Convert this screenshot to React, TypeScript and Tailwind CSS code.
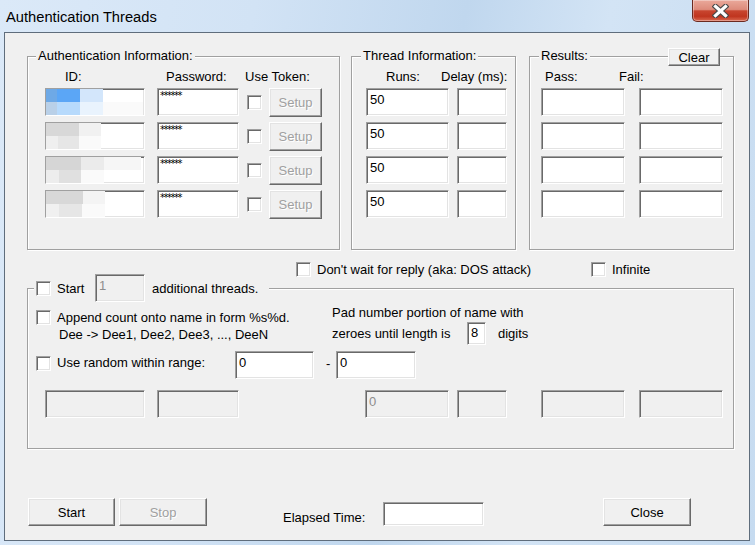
import React from "react";

const sunken =
  "border border-t-[#a0a0a0] border-l-[#a0a0a0] border-b-white border-r-white shadow-[inset_1px_1px_0_#696969,inset_-1px_-1px_0_#e3e3e3]";
const raised =
  "border border-t-white border-l-white border-b-[#696969] border-r-[#696969] shadow-[inset_-1px_-1px_0_#a0a0a0,inset_1px_1px_0_#e3e3e3] bg-[#f0f0f0]";

function Field({
  w,
  h = 28,
  disabled = false,
  text,
  children,
  className = "",
  pt = "pt-[3px]",
}: {
  w: number;
  h?: number;
  disabled?: boolean;
  text?: string;
  children?: React.ReactNode;
  className?: string;
  pt?: string;
}) {
  return (
    <div
      className={`${sunken} ${disabled ? "bg-[#f0f0f0] text-[#8d8d8d]" : "bg-white text-black"} overflow-hidden shrink-0 ${className}`}
      style={{ width: w, height: h }}
    >
      {children}
      {text !== undefined && (
        <div className={`pl-[3px] ${pt} text-[13px] leading-[15px]`}>{text}</div>
      )}
    </div>
  );
}

function Check({ className = "" }: { className?: string }) {
  return <div className={`w-[15px] h-[15px] shrink-0 bg-white ${sunken} ${className}`} />;
}

function Btn({
  w,
  h = 28,
  label,
  disabled = false,
  className = "",
}: {
  w: number;
  h?: number;
  label: string;
  disabled?: boolean;
  className?: string;
}) {
  return (
    <div
      className={`${raised} shrink-0 flex items-center justify-center text-[13px] leading-[15px] ${disabled ? "text-[#a0a0a0] [text-shadow:1px_1px_0_#ffffff]" : "text-black"} ${className}`}
      style={{ width: w, height: h }}
    >
      {label}
    </div>
  );
}

function Group({
  w,
  h,
  legend,
  legendLeft,
  children,
  extra,
}: {
  w: number;
  h: number;
  legend: React.ReactNode;
  legendLeft: number;
  children?: React.ReactNode;
  extra?: React.ReactNode;
}) {
  return (
    <div
      className="relative shrink-0 border border-[#a0a0a0] shadow-[inset_1px_1px_0_#ffffff,1px_1px_0_#ffffff]"
      style={{ width: w, height: h }}
    >
      <div
        className="absolute -top-[9px] bg-[#f0f0f0] px-[2px] text-[13px] leading-[15px]"
        style={{ left: legendLeft }}
      >
        {legend}
      </div>
      {extra}
      {children}
    </div>
  );
}

type Cell = [number, string];
const mosaics: { top: Cell[]; bottom: Cell[] }[] = [
  {
    top: [
      [11, "#6ea9e6"],
      [23, "#5ba6f6"],
      [23, "#d3e6fb"],
    ],
    bottom: [
      [11, "#b9d0e8"],
      [23, "#b7dafc"],
      [23, "#e9f3fd"],
      [40, "#fafafa"],
    ],
  },
  {
    top: [
      [33, "#d8d8d8"],
      [22, "#f1f1f1"],
    ],
    bottom: [
      [12, "#efefef"],
      [21, "#e6e6e6"],
      [22, "#fafafa"],
    ],
  },
  {
    top: [
      [35, "#d6d6d6"],
      [23, "#ebebeb"],
      [37, "#f6f6f6"],
    ],
    bottom: [
      [13, "#ededed"],
      [22, "#e0e0e0"],
      [23, "#fafafa"],
    ],
  },
  {
    top: [
      [37, "#d8d8d8"],
      [22, "#f4f4f4"],
    ],
    bottom: [
      [13, "#f0f0f0"],
      [23, "#e6e6e6"],
      [23, "#fafafa"],
    ],
  },
];

function Mosaic({ idx }: { idx: number }) {
  const m = mosaics[idx];
  return (
    <div className="flex flex-col">
      <div className="flex h-[13px]">
        {m.top.map(([w, c], i) => (
          <div key={i} style={{ width: w, background: c }} />
        ))}
      </div>
      <div className="flex h-[13px]">
        {m.bottom.map(([w, c], i) => (
          <div key={i} style={{ width: w, background: c }} />
        ))}
      </div>
    </div>
  );
}

export default function App() {
  const rows = [0, 1, 2, 3];
  return (
    <div className="w-[755px] h-[545px] overflow-hidden font-['Liberation_Sans',Arial,sans-serif] text-black bg-[linear-gradient(100deg,#dbe9f8_0%,#d2e3f5_30%,#c0d7ee_55%,#d3e4f5_72%,#c6dbf0_100%)]">
      {/* title bar */}
      <div className="h-[32px] flex items-start justify-between">
        <div className="pl-[6px] pt-[8px] text-[14.7px] leading-[18px] text-black">
          Authentication Threads
        </div>
        <div className="mr-[6px] w-[57px] h-[22px] rounded-b-[5px] border border-t-0 border-[#6b2a20] bg-[linear-gradient(#eaa99b_0%,#dd8b7b_45%,#c8452f_52%,#c0351f_78%,#d9684f_100%)] shadow-[inset_0_0_0_1px_rgba(255,255,255,0.35)] flex items-center justify-center">
          <svg width="17" height="14" viewBox="0 0 17 14">
            <path d="M3.5 2.5 L13.5 11.5 M13.5 2.5 L3.5 11.5" stroke="#4a4a4a" strokeWidth="5.5" strokeLinecap="square" />
            <path d="M3.5 2.5 L13.5 11.5 M13.5 2.5 L3.5 11.5" stroke="#ffffff" strokeWidth="3.2" strokeLinecap="square" />
          </svg>
        </div>
      </div>

      {/* client area */}
      <div className="ml-[4px] w-[746px] h-[509px] border border-[#5f6d7c] bg-[#f0f0f0] flex flex-col text-[13px] leading-[15px]">
        {/* top groups */}
        <div className="mt-[23px] pl-[22px] flex">
          <Group w={313} h={194} legend="Authentication Information:" legendLeft={8}>
            <div className="pt-[12px] flex h-[27px]">
              <div className="w-[138px] pl-[37px]">ID:</div>
              <div className="w-[79px]">Password:</div>
              <div>Use Token:</div>
            </div>
            <div className="mt-[4px] flex flex-col gap-[6px]">
              {rows.map((r) => (
                <div key={r} className="h-[28px] pl-[17px] flex items-center">
                  <Field w={100}>
                    <Mosaic idx={r} />
                  </Field>
                  <Field w={82} className="ml-[12px]">
                    <div className="pl-[2px] pt-[2px] text-[10px] leading-[9px] tracking-[-1.5px] font-['DejaVu_Sans',sans-serif]">
                      ******
                    </div>
                  </Field>
                  <Check className="ml-[8px]" />
                  <Btn w={53} h={29} label="Setup" disabled className="ml-[7px]" />
                </div>
              ))}
            </div>
          </Group>

          <div className="ml-[11px]">
            <Group w={165} h={194} legend="Thread Information:" legendLeft={9}>
              <div className="pt-[12px] flex h-[27px]">
                <div className="w-[89px] pl-[34px]">Runs:</div>
                <div>Delay (ms):</div>
              </div>
              <div className="mt-[4px] flex flex-col gap-[6px]">
                {rows.map((r) => (
                  <div key={r} className="h-[28px] pl-[14px] flex items-center">
                    <Field w={83} text="50" />
                    <Field w={50} className="ml-[8px]" />
                  </div>
                ))}
              </div>
            </Group>
          </div>

          <div className="ml-[13px]">
            <Group
              w={205}
              h={194}
              legend="Results:"
              legendLeft={9}
              extra={
                <div className="absolute left-[138px] -top-[9px]">
                  <Btn w={52} h={18} label="Clear" />
                </div>
              }
            >
              <div className="pt-[12px] flex h-[27px]">
                <div className="w-[89px] pl-[15px]">Pass:</div>
                <div>Fail:</div>
              </div>
              <div className="mt-[4px] flex flex-col gap-[6px]">
                {rows.map((r) => (
                  <div key={r} className="h-[28px] pl-[11px] flex items-center">
                    <Field w={84} />
                    <Field w={84} className="ml-[14px]" />
                  </div>
                ))}
              </div>
            </Group>
          </div>
        </div>

        {/* don't wait / infinite row */}
        <div className="mt-[12px] h-[15px] pl-[291px] flex items-center">
          <div className="w-[295px] flex items-center">
            <Check />
            <span className="ml-[6px] whitespace-nowrap">Don't wait for reply (aka: DOS attack)</span>
          </div>
          <Check />
          <span className="ml-[6px]">Infinite</span>
        </div>

        {/* lower group */}
        <div className="mt-[11px] pl-[22px]">
          <div className="relative w-[707px] h-[161px] border border-[#a0a0a0] shadow-[inset_1px_1px_0_#ffffff,1px_1px_0_#ffffff]">
            <div className="absolute left-[6px] -top-[15px] h-[28px] bg-[#f0f0f0] pl-[2px] pr-[11px] flex items-center">
              <Check />
              <div className="ml-[6px] w-[38px]">Start</div>
              <Field w={50} h={28} disabled text="1" />
              <span className="ml-[7px] whitespace-nowrap">additional threads.</span>
            </div>

            <div className="mt-[16px] flex">
              <div className="pl-[8px] w-[304px]">
                <div className="mt-[5px] h-[15px] flex items-center">
                  <Check />
                  <span className="ml-[6px] whitespace-nowrap">Append count onto name in form %s%d.</span>
                </div>
                <div className="mt-[2px] pl-[23px] whitespace-nowrap">Dee -&gt; Dee1, Dee2, Dee3, ..., DeeN</div>
              </div>
              <div>
                <div className="whitespace-nowrap">Pad number portion of name with</div>
                <div className="mt-[2px] h-[23px] flex items-center">
                  <div className="w-[135px] whitespace-nowrap">zeroes until length is</div>
                  <Field w={19} h={23} text="8" pt="pt-[2px]" />
                  <span className="ml-[12px]">digits</span>
                </div>
              </div>
            </div>

            <div className="mt-[6px] h-[28px] pl-[8px] flex items-start">
              <div className="w-[199px] flex items-start">
                <Check className="mt-[5px]" />
                <span className="ml-[6px] mt-[4px] whitespace-nowrap">Use random within range:</span>
              </div>
              <Field w={79} text="0" />
              <div className="w-[22px] pl-[12px] mt-[5px]">-</div>
              <Field w={80} text="0" />
            </div>

            <div className="mt-[11px] h-[28px] pl-[17px] flex">
              <Field w={100} disabled />
              <Field w={82} disabled className="ml-[12px]" />
              <Field w={84} disabled text="0" className="ml-[126px]" />
              <Field w={50} disabled className="ml-[8px]" />
              <Field w={84} disabled className="ml-[34px]" />
              <Field w={84} disabled className="ml-[14px]" />
            </div>
          </div>
        </div>

        {/* bottom buttons */}
        <div className="mt-[49px] pl-[23px] flex items-start">
          <Btn w={87} label="Start" />
          <Btn w={88} label="Stop" disabled className="ml-[4px]" />
          <div className="ml-[76px] w-[100px] mt-[12px] whitespace-nowrap">Elapsed Time:</div>
          <Field w={101} h={24} className="mt-[4px]" />
          <Btn w={88} label="Close" className="ml-[119px]" />
        </div>
      </div>
    </div>
  );
}
